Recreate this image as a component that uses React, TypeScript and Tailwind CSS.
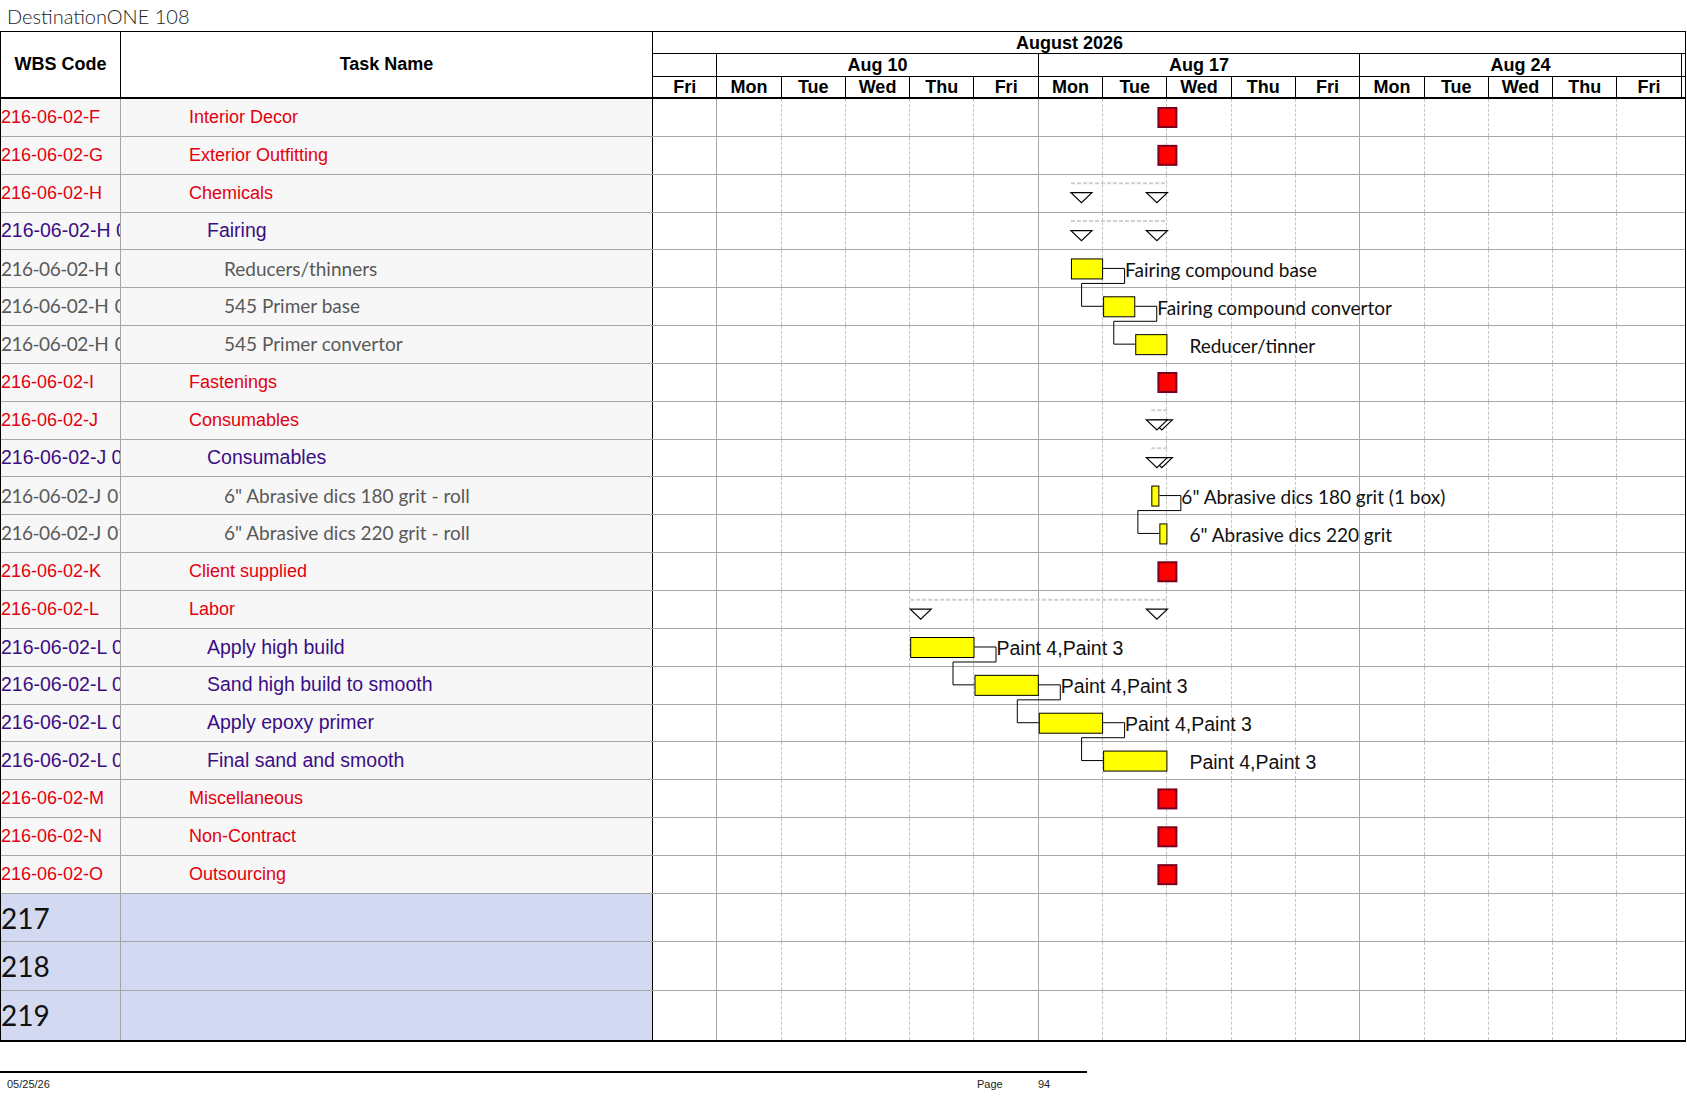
import React from 'react'

type RowKind = 'red' | 'purple' | 'gray'

interface TaskRow {
  wbs: string
  name: string
  kind: RowKind
}

const rows: TaskRow[] = [
  { wbs: '216-06-02-F', name: 'Interior Decor', kind: 'red' },
  { wbs: '216-06-02-G', name: 'Exterior Outfitting', kind: 'red' },
  { wbs: '216-06-02-H', name: 'Chemicals', kind: 'red' },
  { wbs: '216-06-02-H 01', name: 'Fairing', kind: 'purple' },
  { wbs: '216-06-02-H 01.01', name: 'Reducers/thinners', kind: 'gray' },
  { wbs: '216-06-02-H 01.02', name: '545 Primer base', kind: 'gray' },
  { wbs: '216-06-02-H 01.03', name: '545 Primer convertor', kind: 'gray' },
  { wbs: '216-06-02-I', name: 'Fastenings', kind: 'red' },
  { wbs: '216-06-02-J', name: 'Consumables', kind: 'red' },
  { wbs: '216-06-02-J 01', name: 'Consumables', kind: 'purple' },
  { wbs: '216-06-02-J 01.01', name: '6" Abrasive dics 180 grit - roll', kind: 'gray' },
  { wbs: '216-06-02-J 01.02', name: '6" Abrasive dics 220 grit - roll', kind: 'gray' },
  { wbs: '216-06-02-K', name: 'Client supplied', kind: 'red' },
  { wbs: '216-06-02-L', name: 'Labor', kind: 'red' },
  { wbs: '216-06-02-L 01', name: 'Apply high build', kind: 'purple' },
  { wbs: '216-06-02-L 02', name: 'Sand high build to smooth', kind: 'purple' },
  { wbs: '216-06-02-L 03', name: 'Apply epoxy primer', kind: 'purple' },
  { wbs: '216-06-02-L 04', name: 'Final sand and smooth', kind: 'purple' },
  { wbs: '216-06-02-M', name: 'Miscellaneous', kind: 'red' },
  { wbs: '216-06-02-N', name: 'Non-Contract', kind: 'red' },
  { wbs: '216-06-02-O', name: 'Outsourcing', kind: 'red' },
]

const kindText: Record<RowKind, string> = {
  red: "text-[#e3000f] text-[18px] font-['Liberation_Sans',Arial,sans-serif]",
  purple: "text-[#3b0e86] text-[19.5px] font-['Liberation_Sans',Arial,sans-serif]",
  gray: "text-[#595959] text-[19px] font-['Lato',sans-serif]",
}

// the code column of the detail rows runs a bit tighter than the name column
const wbsTracking: Record<RowKind, string> = {
  red: '',
  purple: '',
  gray: 'tracking-[-0.5px] [word-spacing:2px]',
}

const kindIndent: Record<RowKind, string> = {
  red: 'pl-[68px]',
  purple: 'pl-[86px]',
  gray: 'pl-[103px]',
}

const days = ['Fri', 'Mon', 'Tue', 'Wed', 'Thu', 'Fri', 'Mon', 'Tue', 'Wed', 'Thu', 'Fri', 'Mon', 'Tue', 'Wed', 'Thu', 'Fri']

// gantt geometry
const COL = 64.3
const ROW = 37.857
const X = (d: number) => d * COL
const R = (i: number) => i * ROW

const milestones = [0, 1, 7, 12, 18, 19, 20]

const summaries = [
  { row: 2, s: 6.5, e: 8 },
  { row: 3, s: 6.5, e: 8 },
  { row: 8, s: 7.75, e: 8 },
  { row: 9, s: 7.75, e: 8 },
  { row: 13, s: 4, e: 8 },
]

const bars = [
  { row: 4, s: 6.5, e: 7, label: 'Fairing compound base', arial: false },
  { row: 5, s: 7, e: 7.5, label: 'Fairing compound convertor', arial: false },
  { row: 6, s: 7.5, e: 8, label: 'Reducer/tinner', arial: false },
  { row: 10, s: 7.75, e: 7.875, label: '6" Abrasive dics 180 grit (1 box)', arial: false },
  { row: 11, s: 7.875, e: 8, label: '6" Abrasive dics 220 grit', arial: false },
  { row: 14, s: 4, e: 5, label: 'Paint 4,Paint 3', arial: true },
  { row: 15, s: 5, e: 6, label: 'Paint 4,Paint 3', arial: true },
  { row: 16, s: 6, e: 7, label: 'Paint 4,Paint 3', arial: true },
  { row: 17, s: 7, e: 8, label: 'Paint 4,Paint 3', arial: true },
]

const links: [number, number][] = [
  [0, 1],
  [1, 2],
  [3, 4],
  [5, 6],
  [6, 7],
  [7, 8],
]

function DayCells() {
  return (
    <div className="flex w-[1032px] h-full">
      {days.map((_, i) => (
        <div
          key={i}
          className={
            i === 15
              ? 'w-[64.3px] shrink-0 h-full'
              : i === 0 || i === 5 || i === 10
              ? 'w-[64.3px] shrink-0 h-full border-r border-[#a6a6a6]'
              : 'w-[64.3px] shrink-0 h-full border-r border-dashed border-[#c4c4c4]'
          }
        />
      ))}
      <div className="flex-1" />
    </div>
  )
}

function GanttDrawing() {
  return (
    <svg className="absolute left-[652px] top-0 pointer-events-none" width={1032} height={795}>
      {summaries.map((s, i) => {
        const top = R(s.row)
        const x0 = X(s.s)
        const x1 = X(s.e)
        return (
          <g key={i}>
            <line x1={x0} y1={top + 8.5} x2={x1} y2={top + 8.5} stroke="#cfcfcf" strokeWidth={2} strokeDasharray="4 2" />
            <polygon
              points={`${x0},${top + 18} ${x0 + 21},${top + 18} ${x0 + 10.5},${top + 28}`}
              fill="white"
              stroke="black"
              strokeWidth={1.2}
            />
            <polygon
              points={`${x1 - 21},${top + 18} ${x1},${top + 18} ${x1 - 10.5},${top + 28}`}
              fill="white"
              stroke="black"
              strokeWidth={1.2}
            />
          </g>
        )
      })}

      {links.map(([a, b], i) => {
        const A = bars[a]
        const B = bars[b]
        const ya = R(A.row) + 18
        const ym = R(A.row) + 33
        const yb = R(B.row) + 18
        const xr = X(A.e) + 21.5
        const xl = X(B.s) - 21.5
        return (
          <path
            key={i}
            d={`M${X(A.e)} ${ya} H${xr} V${ym} H${xl} V${yb} H${X(B.s)}`}
            fill="none"
            stroke="black"
            strokeWidth={1}
          />
        )
      })}

      {bars.map((b, i) => (
        <g key={i}>
          <rect
            x={X(b.s) + 0.5}
            y={R(b.row) + 8.5}
            width={X(b.e) - X(b.s) - 1}
            height={20}
            fill="#ffff00"
            stroke="black"
            strokeWidth={1}
          />
          <text
            x={X(b.e) + 22}
            y={R(b.row) + 19}
            dominantBaseline="central"
            fill="#111"
            fontFamily={b.arial ? "'Liberation Sans', Arial, sans-serif" : "Lato, sans-serif"}
            fontSize={b.arial ? 19.5 : 19}
          >
            {b.label}
          </text>
        </g>
      ))}

      {milestones.map((r) => (
        <rect
          key={r}
          x={X(8) - 9}
          y={R(r) + 9}
          width={18}
          height={19}
          fill="#ff0000"
          stroke="#7a0020"
          strokeWidth={2}
        />
      ))}
    </svg>
  )
}

export default function App() {
  return (
    <div className="w-[1687px] h-[1097px] bg-white overflow-hidden text-black">
      {/* TITLE */}
      <div className="h-[31px] pl-[7px] flex items-center text-[20px] font-light text-[#222] font-['Lato',sans-serif]">
        DestinationONE 108
      </div>

      {/* TABLE */}
      <div className="w-[1686px] border-l border-r border-t border-b-2 border-black">
        {/* HEADER */}
        <div className="flex h-[67px] border-b-2 border-black font-['Liberation_Sans',Arial,sans-serif] font-bold text-[18px]">
          <div className="w-[120px] shrink-0 border-r border-black flex items-center justify-center">WBS Code</div>
          <div className="w-[532px] shrink-0 border-r border-black flex items-center justify-center">Task Name</div>
          <div className="w-[1032px] shrink-0 flex flex-col">
            <div className="h-[22px] border-b border-black flex items-center">
              <div className="w-[833px] text-center leading-none">August 2026</div>
            </div>
            <div className="h-[23px] border-b border-black flex">
              <div className="w-[64.3px] shrink-0 border-r border-black" />
              {['Aug 10', 'Aug 17', 'Aug 24'].map((w) => (
                <div key={w} className="w-[321.5px] shrink-0 border-r border-black flex items-center justify-center leading-none">
                  {w}
                </div>
              ))}
              <div className="flex-1" />
            </div>
            <div className="h-[20px] flex">
              {days.map((d, i) => (
                <div key={i} className="w-[64.3px] shrink-0 border-r border-black flex items-center justify-center leading-none">
                  {d}
                </div>
              ))}
              <div className="flex-1" />
            </div>
          </div>
        </div>

        {/* BODY */}
        <div className="relative">
          {rows.map((r, i) => (
            <div key={i} className="flex h-[37.857px] border-b border-[#a6a6a6]">
              <div
                className={`w-[120px] shrink-0 bg-[#f7f7f7] border-r border-[#a6a6a6] flex items-center overflow-hidden whitespace-nowrap ${kindText[r.kind]} ${wbsTracking[r.kind]}`}
              >
                {r.wbs}
              </div>
              <div
                className={`w-[532px] shrink-0 bg-[#f7f7f7] border-r border-black flex items-center overflow-hidden whitespace-nowrap ${kindIndent[r.kind]} ${kindText[r.kind]}`}
              >
                {r.name}
              </div>
              <DayCells />
            </div>
          ))}

          {['217', '218', '219'].map((n, i) => (
            <div key={n} className={`flex h-[48.67px] ${i < 2 ? 'border-b border-[#a6a6a6]' : ''}`}>
              <div className="w-[120px] shrink-0 bg-[#d3d9f0] border-r border-[#a6a6a6] flex items-center text-[28px] font-['Lato',sans-serif] text-[#111]">
                {n}
              </div>
              <div className="w-[532px] shrink-0 bg-[#d3d9f0] border-r border-black" />
              <DayCells />
            </div>
          ))}

          <GanttDrawing />
        </div>
      </div>

      {/* FOOTER */}
      <div className="mt-[29px] w-[1087px] border-t-2 border-black" />
      <div className="relative h-[24px] flex items-center text-[11px] text-[#222] font-['Liberation_Sans_Narrow','Liberation_Sans',sans-serif]">
        <span className="pl-[7px] w-[977px]">05/25/26</span>
        <span className="w-[61px]">Page</span>
        <span>94</span>
      </div>
    </div>
  )
}
